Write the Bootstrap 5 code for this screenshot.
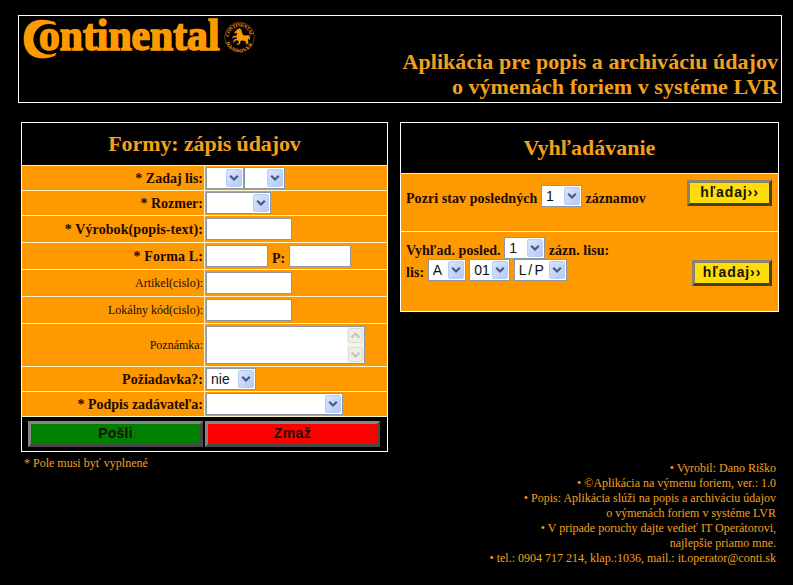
<!DOCTYPE html>
<html lang="sk">
<head>
<meta charset="utf-8">
<meta name="viewport" content="width=device-width, initial-scale=1">
<title>Continental LVR</title>
<link href="https://cdn.jsdelivr.net/npm/bootstrap@5.3.0/dist/css/bootstrap.min.css" rel="stylesheet">
<style>
body{background:#000;color:#f2a01e;font-family:"Liberation Serif",serif;font-size:12px;line-height:15px;width:793px;height:585px;overflow:hidden}
.banner{margin:15px 11px 0 18px;height:88px;border:1px solid #fff;padding:0 3px 3px 3px}
.banner svg{overflow:visible}
.banner h1,.heading{font-size:22px;line-height:25px;font-weight:700;margin:0}
.banner h1{letter-spacing:.04px}
.columns{padding:19px 14px 0 21px}
.panel{border:1px solid #fff}
.panel-form{width:367px}
.panel-find{width:379px;height:190px}
.heading{height:43px;border-bottom:1px solid #fff3c4;padding-bottom:2px}
.panel-form .heading{letter-spacing:-.1px}
.panel-find .heading{height:51px}
.line{display:grid;grid-template-columns:182px 1fr;height:25px;background:#f90;color:#1c0a00;border-bottom:1px solid #fff3c4}
.line.mid{height:27px}
.line.tall{height:43px}
.line>label{display:flex;align-items:center;justify-content:flex-end;padding-right:1px}
.line>div{border-left:1px solid #fff3c4;display:flex;align-items:center;padding-left:1px}
.strong-label{font-size:14px;font-weight:700}
.mid.strong-label label{letter-spacing:.1px}
.box{appearance:none;background-color:#fff;border:1px solid #8c98a5;outline:0;height:22px;border-radius:0;padding:0 0 0 4px;color:#111;font:14px "Liberation Sans",sans-serif}
select.box{background:#fff url("data:image/svg+xml,%3Csvg xmlns='http://www.w3.org/2000/svg' width='16' height='18'%3E%3Cdefs%3E%3ClinearGradient id='g' x2='1' y2='1'%3E%3Cstop stop-color='%23dbe6fe'/%3E%3Cstop offset='1' stop-color='%23b3c8f6'/%3E%3C/linearGradient%3E%3C/defs%3E%3Crect x='.5' y='.5' width='15' height='17' rx='1.5' fill='url(%23g)' stroke='%23bccdf3'/%3E%3Cpath d='M4.2 6.8L8 10.5L11.8 6.8' fill='none' stroke='%23465a80' stroke-width='2.2'/%3E%3C/svg%3E") no-repeat right 1px center}
.w38{width:38px}.w41{width:41px}.w53{width:53px;word-spacing:-1.5px}.w50{width:50px}.w62{width:62px}.w65{width:65px}.w86{width:86px}.w137{width:137px}
.note-area{width:159px;height:38px;background:#fff;border:1px solid #8c98a5}
.note-area textarea{border:0;resize:none;outline:0;background:transparent;overflow:hidden}
.scroller{width:17px;background:#f4f3ec}
.bevel{border:3px solid;border-color:#858585 #484848 #484848 #858585;border-radius:0;height:26px;padding:0 0 1px;font:bold 14px/19px "Liberation Sans",sans-serif;letter-spacing:.2px;color:#1a1200}
.bevel.red{background:#f00;letter-spacing:.4px}
.bevel.green{background:#008000}
.w175{width:175px}
.actions{height:34px;padding:0 7px 0 6px;gap:2px}
.bevel.go{background:#ffdc0a;border-color:#8a8468 #45402a #45402a #8a8468;letter-spacing:.9px}
.find{background:#f90;color:#1c0a00;font-size:14px;font-weight:700;padding:0 6px 0 5px}
.find-a{height:58px;border-bottom:1px solid #fff3c4;padding-top:6px}
.find-b{height:79px;padding-top:5px}
.find-a>div{padding-top:5px}
.find-b .go{margin-top:23px}
.find .gap-select{column-gap:3.5px;height:22px;letter-spacing:.07px}
.foot{padding:0 17px 0 24px}
.credits{padding-top:9px}
</style>
<script src="https://cdn.jsdelivr.net/npm/bootstrap@5.3.0/dist/js/bootstrap.bundle.min.js"></script>
</head>
<body>
<header class="banner d-flex justify-content-between">
<svg width="240" height="50" viewBox="22 16 240 50" font-family="Liberation Serif" font-weight="700" fill="#f90" role="img" aria-label="Continental">
<text x="24.6" y="54.8" font-size="48" textLength="32" lengthAdjust="spacingAndGlyphs" stroke="#f90" stroke-width="6.5" stroke-linejoin="round">C</text>
<ellipse cx="49" cy="39.2" rx="15.6" ry="15.2" fill="#000"/>
<text x="39" y="50" font-size="43.5" textLength="180.5" lengthAdjust="spacingAndGlyphs" stroke="#f90" stroke-width="1.7">ontinental</text>
<circle cx="239.5" cy="37" r="14.8" fill="none" stroke="#a86a0c" stroke-width=".6"/>
<path id="arcTop" d="M229 37a10.5 10.5 0 0 1 21 0" fill="none"/>
<path id="arcLow" d="M225.6 38.5a13.9 13.9 0 0 0 27.8 0" fill="none"/>
<text font-size="5"><textPath href="#arcTop" textLength="32">CONTINENTAL</textPath></text>
<text font-size="5"><textPath href="#arcLow" startOffset="4" textLength="34">HANNOVER</textPath></text>
<path d="M237.6 29.2l2-1 1.8 1.6.6 3.2 1.4 2.2 3.4.4 1.6-.6 1.6 2-.4 3.4-1-1.8-.8 1.6.8 2.4-1.8 2-1.2-.3.8-1.9-1.8-1.6-3-.2-1.4 1 .2 1.8-2 1.4-1.8 0 0-.9 2-.7.2-1.8-1.4-1.2-2.6.6-.8 1.8-.9-.3.5-2.6 3.2-1 .2-1.2-3-.2-1.4 1-.6-.8 1.6-1.6 3-.2.4-3-2.2.8-.5-1z"/>
</svg>
<h1 class="text-end align-self-end">Aplikácia pre popis a archiváciu údajov<br>o výmenách foriem v systéme LVR</h1>
</header>
<main class="columns d-flex justify-content-between align-items-start">
<form class="panel panel-form">
<h2 class="heading d-flex align-items-center justify-content-center">Formy: zápis údajov</h2>
<div class="line strong-label"><label>* Zadaj lis:</label><div><select class="box w38"><option></option></select><select class="box w41"><option></option></select></div></div>
<div class="line strong-label"><label>* Rozmer:</label><div><select class="box w65"><option></option></select></div></div>
<div class="line mid strong-label"><label>* Výrobok(popis-text):</label><div><input class="box w86"></div></div>
<div class="line mid strong-label"><label>* Forma L:</label><div><input class="box w62"><span class="mx-1 pt-1">P:</span><input class="box w62"></div></div>
<div class="line mid"><label>Artikel(cislo):</label><div><input class="box w86"></div></div>
<div class="line mid"><label>Lokálny kód(cislo):</label><div><input class="box w86"></div></div>
<div class="line tall"><label>Poznámka:</label><div><div class="note-area d-flex justify-content-between"><textarea class="w-75"></textarea>
<svg class="scroller" width="17" height="36" viewBox="0 0 17 36"><g fill="#eeeee6" stroke="#dcdbd0"><rect x="1.5" y="1.5" width="14" height="14" rx="2"/><rect x="1.5" y="20.5" width="14" height="14" rx="2"/></g><path d="M4.5 10.5l4-4 4 4M4.5 25.5l4 4 4-4" fill="none" stroke="#c6c5ba" stroke-width="2.2"/></svg></div></div></div>
<div class="line strong-label"><label>Požiadavka?:</label><div><select class="box w50"><option>nie</option></select></div></div>
<div class="line strong-label"><label>* Podpis zadávateľa:</label><div><select class="box w137"><option></option></select></div></div>
<div class="actions d-flex align-items-center"><button type="button" class="bevel green w175">Pošli</button><button type="button" class="bevel red w175">Zmaž</button></div>
</form>
<form class="panel panel-find">
<h2 class="heading d-flex align-items-center justify-content-center">Vyhľadávanie</h2>
<div class="find find-a d-flex justify-content-between"><div><div class="d-flex align-items-center gap-select"><span class="pt-1">Pozri stav posledných</span><select class="box w41"><option>1</option></select><span class="pt-1">záznamov</span></div></div><button type="button" class="bevel go" style="width:85px">hľadaj››</button></div>
<div class="find find-b d-flex justify-content-between"><div><div class="d-flex align-items-center gap-select"><span class="pt-1">Vyhľad. posled.</span><select class="box w41"><option>1</option></select><span class="pt-1">zázn. lisu:</span></div><div class="d-flex align-items-center gap-select"><span class="pt-1">lis:</span><select class="box w38"><option>A</option></select><select class="box w41"><option>01</option></select><select class="box w53"><option>L / P</option></select></div></div><button type="button" class="bevel go" style="width:80px">hľadaj››</button></div>
</form>
</main>
<footer class="foot d-flex justify-content-between"><div class="pt-1">* Pole musi byť vyplnené</div><div class="text-end credits">• Vyrobil: Dano Riško<br>• ©Aplikácia na výmenu foriem, ver.: 1.0<br>• Popis: Aplikácia slúži na popis a archiváciu údajov<br>o výmenách foriem v systéme LVR<br>• V pripade poruchy dajte vedieť IT Operátorovi,<br>najlepšie priamo mne.<br>• tel.: 0904 717 214, klap.:1036, mail.: it.operator@conti.sk</div></footer>
</body>
</html>
